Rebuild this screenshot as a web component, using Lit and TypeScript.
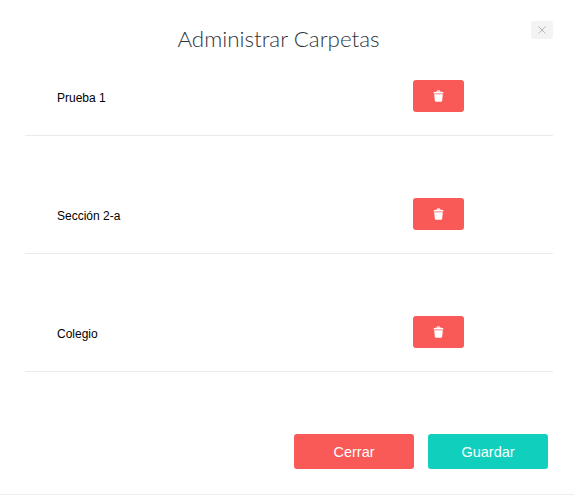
import { LitElement, html, css, svg } from 'lit';
import { customElement } from 'lit/decorators.js';

const trash = svg`<svg class="trash" viewBox="0 0 12 13" width="11" height="12" aria-hidden="true">
  <path fill="#fff" d="M4.2 1.6C4.4.6 5 .2 6 .2s1.6.4 1.8 1.4l2.6.5c.6.1 1 .5 1 1v.8H.6v-.8c0-.5.4-.9 1-1zM5.3 1.5h1.4C6.6 1.2 6.3 1.1 6 1.1s-.6.1-.7.4z"/>
  <path fill="#fff" d="M1.3 4.6h9.4l-.7 7c-.1.8-.6 1.2-1.3 1.2H3.3c-.7 0-1.2-.4-1.3-1.2z"/>
</svg>`;

@customElement('app-root')
export class AppRoot extends LitElement {
  static styles = css`
    :host {
      display: block;
      box-sizing: border-box;
      height: 495px;
      position: relative;
      background: #fff;
      border-bottom: 1px solid #eeeeee;
      font-family: "Liberation Sans", Arial, sans-serif;
    }
    .close {
      position: absolute;
      top: 21px;
      left: 531px;
      width: 22px;
      height: 18px;
      padding: 0;
      border: none;
      border-radius: 3px;
      background: #f3f3f3;
      display: flex;
      align-items: center;
      justify-content: center;
    }
    h1 {
      margin: 0;
      padding: 24px 17px 0 0;
      height: 55px;
      box-sizing: border-box;
      line-height: 30px;
      text-align: center;
      font-family: "Lato", sans-serif;
      font-weight: 300;
      font-size: 22.4px;
      color: #2f343a;
    }
    .folders {
      margin: 25px 21px 0 25px;
      height: 354px;
    }
    .row {
      height: 118px;
    }
    .row-inner {
      height: 55px;
      border-bottom: 1px solid #eaeaea;
      display: flex;
      align-items: flex-start;
      padding-left: 32px;
      padding-right: 89px;
    }
    .name {
      flex: 1;
      font-size: 12px;
      line-height: 36px;
      color: #000;
    }
    .delete {
      width: 51px;
      height: 32px;
      padding: 0;
      border: none;
      border-radius: 3px;
      background: #f95a57;
      display: flex;
      align-items: center;
      justify-content: center;
    }
    .footer {
      display: flex;
      justify-content: flex-end;
      gap: 14px;
      padding-right: 26px;
    }
    .action {
      width: 120px;
      height: 35px;
      padding: 0;
      border: none;
      border-radius: 3px;
      color: #fff;
      font-family: inherit;
      font-size: 14.5px;
    }
    .cerrar { background: #f95a57; }
    .guardar { background: #10d0bd; }
  `;

  folders = ['Prueba 1', 'Sección 2-a', 'Colegio'];

  render() {
    return html`
      <button class="close" aria-label="Cerrar">
        <svg viewBox="0 0 8 8" width="8" height="8" aria-hidden="true">
          <path d="M.5.5l7 7M7.5.5l-7 7" stroke="#b5b5b5" stroke-width="1" fill="none"/>
        </svg>
      </button>
      <h1>Administrar Carpetas</h1>
      <div class="folders">
        ${this.folders.map(name => html`
          <div class="row">
            <div class="row-inner">
              <span class="name">${name}</span>
              <button class="delete" aria-label="Eliminar ${name}">${trash}</button>
            </div>
          </div>
        `)}
      </div>
      <div class="footer">
        <button class="action cerrar">Cerrar</button>
        <button class="action guardar">Guardar</button>
      </div>
    `;
  }
}
